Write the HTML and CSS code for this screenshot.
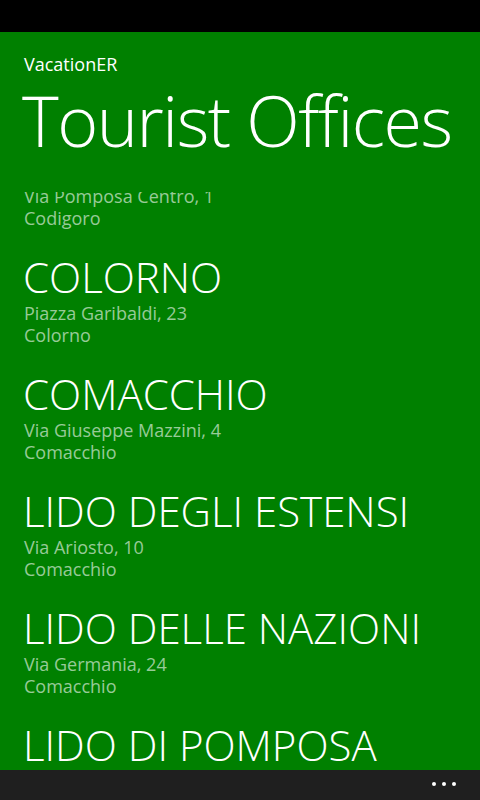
FILE: index.html
```html
<!DOCTYPE html>
<html lang="it">
<head>
<meta charset="utf-8">
<title>Tourist Offices</title>
<link rel="stylesheet" href="styles.css">
</head>
<body>
<div class="phone">
  <div class="status-bar"></div>
  <header class="header">
    <div class="app-name">VacationER</div>
    <h1 class="page-title">Tourist Offices</h1>
  </header>
  <div class="list-viewport">
    <ul class="list">
      <li class="item">
        <div class="item-title">CODIGORO</div>
        <div class="item-sub">Via Pomposa Centro, 1</div>
        <div class="item-sub">Codigoro</div>
      </li>
      <li class="item">
        <div class="item-title">COLORNO</div>
        <div class="item-sub">Piazza Garibaldi, 23</div>
        <div class="item-sub">Colorno</div>
      </li>
      <li class="item">
        <div class="item-title">COMACCHIO</div>
        <div class="item-sub">Via Giuseppe Mazzini, 4</div>
        <div class="item-sub">Comacchio</div>
      </li>
      <li class="item">
        <div class="item-title">LIDO DEGLI ESTENSI</div>
        <div class="item-sub">Via Ariosto, 10</div>
        <div class="item-sub">Comacchio</div>
      </li>
      <li class="item">
        <div class="item-title">LIDO DELLE NAZIONI</div>
        <div class="item-sub">Via Germania, 24</div>
        <div class="item-sub">Comacchio</div>
      </li>
      <li class="item">
        <div class="item-title">LIDO DI POMPOSA</div>
        <div class="item-sub">Via Pomposa</div>
        <div class="item-sub">Comacchio</div>
      </li>
    </ul>
  </div>
  <div class="app-bar">
    <span class="dot"></span><span class="dot"></span><span class="dot"></span>
  </div>
</div>
</body>
</html>
```

FILE: styles.css
```css
html, body {
  margin: 0;
  padding: 0;
  background: #008000;
}

.phone {
  width: 480px;
  height: 800px;
  display: flex;
  flex-direction: column;
  background: #008000;
  color: #ffffff;
  font-family: "Open Sans", "Noto Sans", sans-serif;
  overflow: hidden;
}

.status-bar {
  height: 32px;
  flex: 0 0 32px;
  background: #000000;
}

.header {
  padding: 20px 0 0 24px;
  flex: 0 0 auto;
}

.app-name {
  font-size: 18px;
  line-height: 24px;
  font-weight: 400;
}

.page-title {
  margin: 4px 0 0 0;
  font-size: 70px;
  line-height: 80px;
  font-weight: 300;
  letter-spacing: -1.5px;
  margin-left: -2px;
}

.list-viewport {
  margin-top: 32px;
  flex: 1 1 auto;
  overflow: hidden;
}

.list {
  list-style: none;
  margin: -57px 0 0 0;
  padding: 0 0 0 24px;
}

.item {
  margin-bottom: 23px;
}

.item-title {
  font-size: 42px;
  line-height: 50px;
  font-weight: 300;
  margin-left: -1px;
}

.item-sub {
  font-size: 18px;
  line-height: 22px;
  color: rgba(255, 255, 255, 0.6);
}

.app-bar {
  flex: 0 0 30px;
  height: 30px;
  background: #1f1f1f;
  display: flex;
  justify-content: flex-end;
  align-items: flex-start;
  gap: 6px;
  padding: 12px 24px 0 0;
  box-sizing: border-box;
}

.dot {
  width: 4px;
  height: 4px;
  border-radius: 50%;
  background: #ffffff;
}
```
